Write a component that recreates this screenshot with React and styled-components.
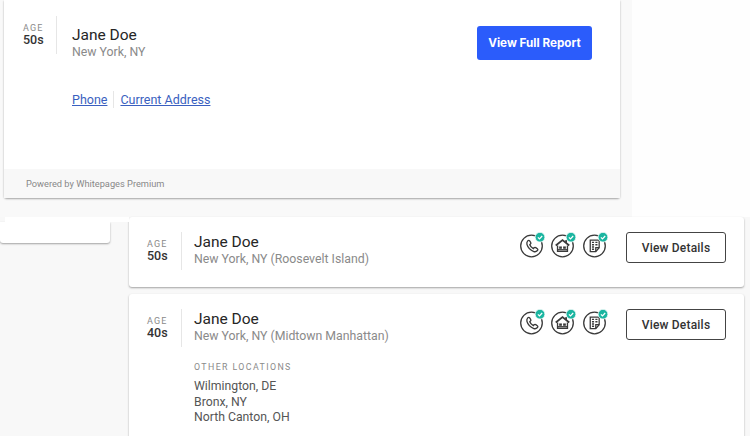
import React from "react";
import styled, { createGlobalStyle } from "styled-components";

const Phone = () => (
  <path
    d="M6.8 5.6c.8-.8 1.8-.8 2.4 0l1.3 2c.4.7.3 1.4-.3 2l-.9.9c.8 2 2.4 3.7 4.5 4.7l1-1c.6-.6 1.3-.6 2-.2l2 1.4c.8.6.8 1.6.1 2.3-1.2 1.3-2.8 1.8-4.5 1.2-4.2-1.6-7.4-4.9-8.6-9-.4-1.6 0-3.1 1-4.3z"
    fill="none"
    stroke="#3a3a3a"
    strokeWidth="1.7"
  />
);

const House = () => (
  <g fill="none" stroke="#3a3a3a" strokeWidth="1.5">
    <path d="M4 11.5 11.5 5.5l7.5 6" strokeWidth="2" />
    <path d="M6 11.5v6.5h11v-6.5" />
    <path d="M15.5 5.5v3" strokeWidth="2" />
    <rect x="7.8" y="12.5" width="3" height="2.6" fill="#3a3a3a" stroke="none" />
    <rect x="12.2" y="12.5" width="3" height="2.6" fill="#3a3a3a" stroke="none" />
    <path d="M6 16.2h11" />
  </g>
);

const Report = () => (
  <g fill="none" stroke="#3a3a3a" strokeWidth="1.5">
    <path d="M6.5 5h10.5v9l-4 4.5H6.5z" />
    <path d="M13 18.5V14h4" />
    <path
      d="M8.5 7.8h2.5M12.5 7.8h2.5M8.5 10.5h2.5M12.5 10.5h2.5M8.5 13.2h2.5M8.5 15.8h2.5"
      strokeWidth="1.6"
    />
  </g>
);

const VerifiedIcon = ({ scale, children }) => (
  <svg width="28" height="24" viewBox="0 0 28 24" style={{ overflow: "visible" }}>
    <circle cx="11.5" cy="12" r="10.8" fill="#fff" stroke="#3a3a3a" strokeWidth="1.3" />
    <g transform={`translate(11.5 12) scale(${scale}) translate(-11.5 -12)`}>{children}</g>
    <circle cx="20" cy="3.2" r="4.9" fill="#1ab5a0" stroke="#fff" strokeWidth="0.8" />
    <path d="M17.9 3.3l1.6 1.6 2.7-2.9" fill="none" stroke="#fff" strokeWidth="1.2" />
  </svg>
);

const results = [
  {
    age: "50s",
    place: "New York, NY (Roosevelt Island)",
    others: [],
  },
  {
    age: "40s",
    place: "New York, NY (Midtown Manhattan)",
    others: ["Wilmington, DE", "Bronx, NY", "North Canton, OH"],
  },
];

export default function App() {
  return (
    <>
      <GlobalStyle />
      <Page>
        <Hero>
          <HeroInner>
            <TopCard>
              <TopBody>
                <TopRow>
                  <AgeBlock $large>
                    <AgeLabel>AGE</AgeLabel>
                    <AgeValue>50s</AgeValue>
                  </AgeBlock>
                  <Person $large>
                    <Name>Jane Doe</Name>
                    <Place>New York, NY</Place>
                  </Person>
                  <PrimaryButton>View Full Report</PrimaryButton>
                </TopRow>
                <Links>
                  <LinkItem href="#">Phone</LinkItem>
                  <LinkDivider />
                  <LinkItem href="#">Current Address</LinkItem>
                </Links>
              </TopBody>
              <Footer>Powered by Whitepages Premium</Footer>
            </TopCard>
          </HeroInner>
        </Hero>
        <Columns>
          <Sidebar />
          <Results>
            {results.map((r) => (
              <ResultCard key={r.age} $tall={r.others.length > 0}>
                <AgeBlock>
                  <AgeLabel>AGE</AgeLabel>
                  <AgeValue>{r.age}</AgeValue>
                </AgeBlock>
                <Person>
                  <Name>Jane Doe</Name>
                  <Place>{r.place}</Place>
                  {r.others.length > 0 && (
                    <Others>
                      <OthersLabel>OTHER LOCATIONS</OthersLabel>
                      {r.others.map((o) => (
                        <OtherPlace key={o}>{o}</OtherPlace>
                      ))}
                    </Others>
                  )}
                </Person>
                <Icons>
                  <VerifiedIcon scale={0.8}>
                    <Phone />
                  </VerifiedIcon>
                  <VerifiedIcon scale={0.9}>
                    <House />
                  </VerifiedIcon>
                  <VerifiedIcon scale={0.85}>
                    <Report />
                  </VerifiedIcon>
                </Icons>
                <OutlineButton>View Details</OutlineButton>
              </ResultCard>
            ))}
          </Results>
        </Columns>
      </Page>
    </>
  );
}

const GlobalStyle = createGlobalStyle`
  html, body {
    margin: 0;
    padding: 0;
    background: #f8f8f8;
    font-family: Roboto, "Liberation Sans", sans-serif;
    overflow: hidden;
  }
`;

const Page = styled.div`
  width: 750px;
  height: 436px;
  overflow: hidden;
`;

const Hero = styled.div`
  height: 217px;
  background: #fefefe;
`;

const HeroInner = styled.div`
  width: 632px;
  height: 217px;
  padding-left: 4px;
  box-sizing: border-box;
  background: #f9f9f9;
`;

const TopCard = styled.div`
  width: 616px;
  height: 198px;
  display: flex;
  flex-direction: column;
  background: #fff;
  border-radius: 0 0 3px 3px;
  box-shadow: 0 1px 2px rgba(0, 0, 0, 0.35);
`;

const TopBody = styled.div`
  flex: 1;
  padding: 16px 28px 0 19px;
`;

const TopRow = styled.div`
  display: flex;
  align-items: flex-start;
`;

const AgeBlock = styled.div`
  width: ${(p) => (p.$large ? "34px" : "35px")};
  height: 38px;
  padding-top: 7px;
  box-sizing: border-box;
  border-right: 1px solid #e6e6e6;
  text-align: left;
  flex-shrink: 0;
`;

const AgeLabel = styled.div`
  font-size: 9px;
  line-height: 10px;
  letter-spacing: 1.2px;
  color: #8a8a8a;
`;

const AgeValue = styled.div`
  font-size: 12.5px;
  line-height: 14px;
  font-weight: 500;
  color: #333;
`;

const Person = styled.div`
  flex: 1;
  margin-left: ${(p) => (p.$large ? "15px" : "12px")};
  padding-top: ${(p) => (p.$large ? "9px" : "0")};
`;

const Name = styled.div`
  padding-top: 1px;
  font-size: 15.5px;
  line-height: 18px;
  color: #262626;
`;

const Place = styled.div`
  font-size: 12.3px;
  line-height: 16px;
  color: #8a8a8a;
`;

const PrimaryButton = styled.button`
  width: 115px;
  height: 34px;
  margin-top: 10px;
  padding: 0 0 1px;
  border: 0;
  border-radius: 3px;
  background: #2b5cfb;
  color: #fff;
  font-family: Inter, sans-serif;
  font-size: 11.7px;
  font-weight: 700;
`;

const Links = styled.div`
  display: flex;
  align-items: center;
  margin: 30px 0 0 49px;
  height: 18px;
`;

const LinkItem = styled.a`
  font-size: 12.5px;
  color: #3a5fc0;
`;

const LinkDivider = styled.span`
  width: 1px;
  height: 17px;
  margin: 0 6px;
  background: #e6e6e6;
`;

const Footer = styled.div`
  height: 29px;
  padding: 9px 0 0 22px;
  box-sizing: border-box;
  background: #f8f8f8;
  font-size: 9.25px;
  line-height: 12px;
  color: #888;
`;

const Columns = styled.div`
  display: flex;
  align-items: flex-start;
  gap: 19px;
`;

const Sidebar = styled.div`
  position: relative;
  width: 110px;
  height: 21px;
  margin-top: 5px;
  background: #fff;
  border-radius: 0 0 3px 3px;
  box-shadow: 0 1px 2px rgba(0, 0, 0, 0.35);

  &::before {
    content: "";
    position: absolute;
    left: 5px;
    top: -5px;
    width: 124px;
    height: 5px;
    background: #fff;
  }
`;

const Results = styled.div`
  width: 615px;
  display: flex;
  flex-direction: column;
  gap: 7px;
`;

const ResultCard = styled.div`
  display: flex;
  align-items: flex-start;
  padding: 15px 18px 0 18px;
  min-height: ${(p) => (p.$tall ? "180px" : "70px")};
  box-sizing: border-box;
  background: #fff;
  border-radius: 3px;
  box-shadow: 0 1px 2px rgba(0, 0, 0, 0.35);
`;

const Others = styled.div`
  margin-top: 17px;
`;

const OthersLabel = styled.div`
  margin-bottom: 6px;
  font-size: 8.8px;
  line-height: 12px;
  letter-spacing: 1.4px;
  color: #8a8a8a;
`;

const OtherPlace = styled.div`
  font-size: 12.25px;
  line-height: 15.5px;
  color: #555;
`;

const Icons = styled.div`
  display: flex;
  gap: 3.5px;
  margin-top: 2px;
`;

const OutlineButton = styled.button`
  width: 100px;
  height: 31px;
  margin-left: 15.5px;
  border: 1px solid #444;
  border-radius: 3px;
  background: #fff;
  color: #333;
  font-family: Roboto, sans-serif;
  font-size: 12px;
  font-weight: 500;
  letter-spacing: 0.2px;
`;
